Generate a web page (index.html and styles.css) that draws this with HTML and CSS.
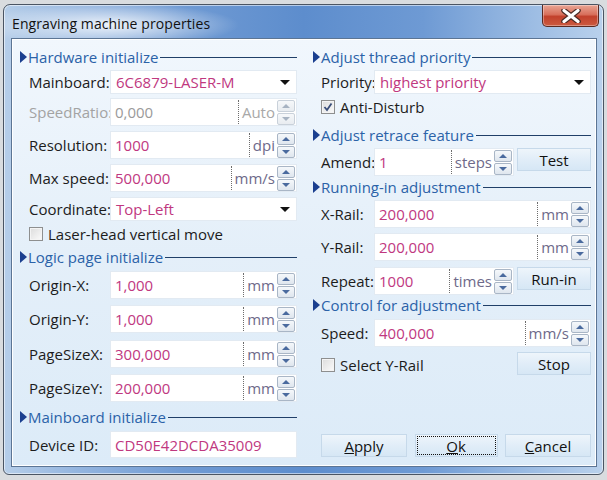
FILE: index.html
```html
<!DOCTYPE html>
<html>
<head>
<meta charset="utf-8">
<link rel="stylesheet" href="styles.css">
</head>
<body>
<div class="win">
  <div class="titlebar">
    <span class="title">Engraving machine properties</span>
    <div class="close"><svg width="20" height="14" viewBox="0 0 20 14"><path d="M3 1.5 L17 12.5 M17 1.5 L3 12.5" stroke="#4a2a24" stroke-width="5.5" stroke-linecap="round"/><path d="M3 1.5 L17 12.5 M17 1.5 L3 12.5" stroke="#fff" stroke-width="3.2" stroke-linecap="round"/></svg></div>
  </div>
  <div class="client">
    <div class="col col-left">
      <div class="hd"><i class="tri"></i><span class="hd-text">Hardware initialize</span><b class="rule"></b></div>
      <div class="row combo-row m4"><span class="lbl">Mainboard:</span><div class="field combo"><span class="val">6C6879-LASER-M</span><i class="arrow"></i></div></div>
      <div class="row m4"><span class="lbl dis">SpeedRatio:</span><div class="field spin"><span class="val dis">0,000</span><span class="unit dis">Auto</span><span class="sb dis"><i class="up"></i><i class="dn"></i></span></div></div>
      <div class="row m5"><span class="lbl">Resolution:</span><div class="field spin"><span class="val">1000</span><span class="unit">dpi</span><span class="sb"><i class="up"></i><i class="dn"></i></span></div></div>
      <div class="row m5"><span class="lbl">Max speed:</span><div class="field spin"><span class="val">500,000</span><span class="unit">mm/s</span><span class="sb"><i class="up"></i><i class="dn"></i></span></div></div>
      <div class="row combo-row m5"><span class="lbl">Coordinate:</span><div class="field combo"><span class="val">Top-Left</span><i class="arrow"></i></div></div>
      <div class="chk m4"><i class="box"></i><span>Laser-head vertical move</span></div>
      <div class="hd m5"><i class="tri"></i><span class="hd-text">Logic page initialize</span><b class="rule"></b></div>
      <div class="row m5"><span class="lbl">Origin-X:</span><div class="field spin"><span class="val">1,000</span><span class="unit">mm</span><span class="sb"><i class="up"></i><i class="dn"></i></span></div></div>
      <div class="row m6"><span class="lbl">Origin-Y:</span><div class="field spin"><span class="val">1,000</span><span class="unit">mm</span><span class="sb"><i class="up"></i><i class="dn"></i></span></div></div>
      <div class="row m7"><span class="lbl">PageSizeX:</span><div class="field spin"><span class="val">300,000</span><span class="unit">mm</span><span class="sb"><i class="up"></i><i class="dn"></i></span></div></div>
      <div class="row m6"><span class="lbl">PageSizeY:</span><div class="field spin"><span class="val">200,000</span><span class="unit">mm</span><span class="sb"><i class="up"></i><i class="dn"></i></span></div></div>
      <div class="hd m6"><i class="tri"></i><span class="hd-text">Mainboard initialize</span><b class="rule"></b></div>
      <div class="row m5 r27"><span class="lbl">Device ID:</span><div class="field text"><span class="val">CD50E42DCDA35009</span></div></div>
    </div>
    <div class="col col-right">
      <div class="hd"><i class="tri"></i><span class="hd-text">Adjust thread priority</span><b class="rule"></b></div>
      <div class="row combo-row m4"><span class="lbl">Priority:</span><div class="field combo"><span class="val">highest priority</span><i class="arrow"></i></div></div>
      <div class="chk m4"><i class="box checked"><svg width="10" height="10" viewBox="0 0 10 10"><path d="M1.5 5 L4 8 L8.5 1.5" fill="none" stroke="#3b4f7a" stroke-width="1.8"/></svg></i><span>Anti-Disturb</span></div>
      <div class="hd m10"><i class="tri"></i><span class="hd-text">Adjust retrace feature</span><b class="rule"></b></div>
      <div class="row m4"><span class="lbl">Amend:</span><div class="field spin short"><span class="val">1</span><span class="unit">steps</span><span class="sb"><i class="up"></i><i class="dn"></i></span></div><button class="btn side">Test</button></div>
      <div class="hd m2"><i class="tri"></i><span class="hd-text">Running-in adjustment</span><b class="rule"></b></div>
      <div class="row m4"><span class="lbl">X-Rail:</span><div class="field spin"><span class="val">200,000</span><span class="unit">mm</span><span class="sb"><i class="up"></i><i class="dn"></i></span></div></div>
      <div class="row m5"><span class="lbl">Y-Rail:</span><div class="field spin"><span class="val">200,000</span><span class="unit">mm</span><span class="sb"><i class="up"></i><i class="dn"></i></span></div></div>
      <div class="row m6"><span class="lbl">Repeat:</span><div class="field spin short"><span class="val">1000</span><span class="unit">times</span><span class="sb"><i class="up"></i><i class="dn"></i></span></div><button class="btn side">Run-in</button></div>
      <div class="hd m1"><i class="tri"></i><span class="hd-text">Control for adjustment</span><b class="rule"></b></div>
      <div class="row m5"><span class="lbl">Speed:</span><div class="field spin"><span class="val">400,000</span><span class="unit">mm/s</span><span class="sb"><i class="up"></i><i class="dn"></i></span></div></div>
      <div class="chkrow m5"><div class="chk"><i class="box"></i><span>Select Y-Rail</span></div><button class="btn side">Stop</button></div>
      <div class="actions">
        <button class="btn act"><u>A</u>pply</button>
        <button class="btn act focus"><u>O</u>k</button>
        <button class="btn act"><u>C</u>ancel</button>
      </div>
    </div>
  </div>
</div>
</body>
</html>
```
FILE: styles.css
```css
* { box-sizing: border-box; }
html, body { margin: 0; padding: 0; }
body {
  width: 607px; height: 480px; overflow: hidden;
  background: #d9dcdf;
  font-family: "Open Sans", "Noto Sans", sans-serif;
  font-size: 14px;
  color: #1c1c1c;
}
.win {
  margin: 4px 3px 0 3px;
  width: 601px; height: 471px;
  border: 1px solid #4b5563;
  border-radius: 7px 7px 6px 6px;
  background:
    radial-gradient(ellipse 130px 22px at 105px 20px, rgba(255,255,255,0.85), rgba(255,255,255,0) 100%),
    linear-gradient(to right, #b6cee9 0%, #94b5df 12%, #6f9ad3 30%, #5d8dcd 50%, #6e9ad4 70%, #9cbce3 88%, #b9d1ec 100%);
  box-shadow: inset 0 0 0 1px rgba(255,255,255,0.55);
  display: flex; flex-direction: column;
  padding: 0 6px 7px 7px;
}
.titlebar {
  height: 33px; flex: none;
  display: flex; align-items: flex-start; justify-content: space-between;
}
.title {
  font-family: "Open Sans", sans-serif;
  font-size: 14px; color: #111;
  margin: 9px 0 0 1px;
  letter-spacing: 0.1px;
}
.close {
  width: 57px; height: 22px; margin: 0 -2px 0 0;
  border: 1px solid #5a2a22; border-top: none;
  border-radius: 0 0 5px 5px;
  background: linear-gradient(#e9a594 0%, #d8705c 45%, #c2412c 55%, #cb5a40 100%);
  box-shadow: inset 0 0 0 1px rgba(255,255,255,0.35);
  display: flex; align-items: center; justify-content: center;
}
.client {
  flex: 1; min-height: 0;
  border: 1px solid #5c7594;
  background: linear-gradient(#f1f7fd 0%, #e4eff9 50%, #dcebf8 100%);
  box-shadow: inset 0 0 0 1px #ffffff;
  display: flex; gap: 16px;
  padding: 9px 5px 9px 8px;
}
.col { display: flex; flex-direction: column; }
.col-left { width: 277px; }
.col-right { width: 278px; }

.hd { display: flex; align-items: center; height: 18px; flex: none; }
.tri {
  width: 0; height: 0;
  border-top: 6px solid transparent; border-bottom: 6px solid transparent;
  border-left: 7px solid #1b3f8f;
  margin-right: 1px;
}
.hd-text { color: #2b62a8; font-size: 15px; white-space: nowrap; line-height: 18px; }
.rule { flex: 1; height: 1px; background: #203f68; margin-left: 2px; margin-top: 1px; }

.row { display: flex; align-items: center; height: 28px; flex: none; padding-left: 9px; }
.row.combo-row { height: 24px; }
.col-right .row { padding-left: 8px; }
.r27 { height: 27px; }
.lbl { width: 81px; flex: none; white-space: nowrap; font-size: 15px; color: #1c1c1c; }
.col-right .lbl { width: 53px; }
.lbl.dis { color: #a3a3a3; }

.field {
  flex: 1; height: 100%;
  background: #fff;
  border: 1px solid #e2eaf2;
  display: flex; align-items: center;
  font-size: 15px;
}
.field .val { flex: 1; padding-left: 4px; color: #c0387f; white-space: nowrap; overflow: hidden; }
.field .val.dis { color: #9a9a9a; }
.combo .val { padding-left: 5px; }
.arrow {
  width: 0; height: 0; margin-right: 6px;
  border-left: 5px solid transparent; border-right: 5px solid transparent;
  border-top: 5px solid #111;
}
.unit {
  align-self: stretch; display: flex; align-items: center;
  border-left: 1px dotted #6d6d6d;
  padding: 0 2px 0 3px;
  color: #6e6a8a;
  margin: 1px 0;
}
.unit.dis { color: #a8a8a8; }
.sb { display: flex; flex-direction: column; gap: 1px; margin-right: 1px; }
.sb i {
  width: 18px; height: 12px; display: flex; align-items: center; justify-content: center;
  border: 1px solid #a9b6c6; border-radius: 2px;
  background: linear-gradient(#f5f8fb, #dfe6ee);
}
.sb i::after {
  content: ""; width: 0; height: 0;
  border-left: 4px solid transparent; border-right: 4px solid transparent;
}
.sb .up::after { border-bottom: 4px solid #4a6a9e; }
.sb .dn::after { border-top: 4px solid #4a6a9e; }
.sb.dis i { border-color: #c9d1da; background: linear-gradient(#f6f8fa, #e8ecf0); }
.sb.dis .up::after { border-bottom-color: #a7b3c2; }
.sb.dis .dn::after { border-top-color: #a7b3c2; }

.short { flex: none; width: 140px; }

.btn {
  font-family: "Open Sans", sans-serif; font-size: 15px; color: #111;
  border: 1px solid #c6d9ea;
  background: linear-gradient(#eef5fb 0%, #e1edf8 50%, #d6e7f5 100%);
  padding: 0; cursor: default;
}
.side { width: 74px; height: 23px; margin-left: 3px; align-self: flex-start; }

.chk { display: flex; align-items: center; height: 18px; padding-left: 9px; font-size: 15px; flex: none; }
.col-right .chk { padding-left: 8px; }
.box {
  width: 14px; height: 14px; margin-right: 5px; flex: none;
  border: 1px solid #8e8f8f;
  background: linear-gradient(135deg, #dcdcdc, #fbfbfb);
  box-shadow: inset 0 0 0 1px #f4f4f4;
  display: flex; align-items: center; justify-content: center;
}
.chkrow { display: flex; justify-content: space-between; align-items: center; height: 23px; flex: none; }
.chkrow .chk { padding-left: 8px; margin-top: 2px; }
.chkrow .side { align-self: auto; }

.actions { margin-top: auto; display: flex; justify-content: space-between; padding-left: 8px; }
.act { width: 86px; height: 23px; }
.act u { text-decoration: underline; }
.focus { outline: 1px dotted #111; outline-offset: -3px; width: 83px; }

.m1 { margin-top: 1px; } .m2 { margin-top: 2px; } .m4 { margin-top: 4px; }
.m5 { margin-top: 5px; } .m6 { margin-top: 6px; } .m7 { margin-top: 7px; } .m10 { margin-top: 10px; }
```
